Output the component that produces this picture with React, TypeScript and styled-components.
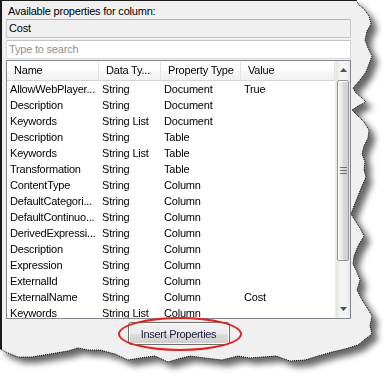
import React from 'react';
import styled, { createGlobalStyle } from 'styled-components';

const GlobalStyle = createGlobalStyle`
  html, body {
    margin: 0;
    padding: 0;
    background: #ffffff;
  }
  * {
    box-sizing: border-box;
  }
`;

// torn paper edge, right side then bottom
const EDGE: [number, number][] = [
  [356, 0], [359, 5], [364, 9], [369, 16], [371, 24], [367, 31], [365, 40], [368, 48],
  [372, 56], [369, 64], [366, 72], [360, 80], [353, 88], [356, 93], [362, 98], [366, 102],
  [358, 106], [352, 110], [358, 116], [364, 122], [369, 130], [368, 138], [364, 146],
  [362, 154], [365, 162], [364, 170], [366, 177], [362, 186], [358, 196], [354, 206],
  [351, 214], [356, 222], [360, 228], [364, 236], [358, 246], [354, 256], [353, 264],
  [357, 272], [360, 280], [357, 290], [361, 298], [366, 306], [372, 316], [370, 326],
  [372, 334], [364, 340], [358, 345],
  [345, 349], [332, 352], [318, 356], [305, 360], [290, 361], [276, 356], [262, 357],
  [250, 358], [238, 356], [222, 360], [205, 358], [190, 356], [178, 359], [168, 362],
  [155, 356], [140, 358], [128, 360], [115, 354], [100, 350], [88, 350], [78, 348],
  [68, 351], [56, 353], [44, 355], [32, 357], [18, 357], [8, 353], [0, 349],
];

const clipShape = `polygon(0px 0px, ${EDGE.map(([x, y]) => `${x}px ${y}px`).join(', ')})`;
const edgeLine = EDGE.map(([x, y]) => `${x},${y}`).join(' ');

const ROWS = [
  { name: 'AllowWebPlayer...', type: 'String', prop: 'Document', value: 'True' },
  { name: 'Description', type: 'String', prop: 'Document', value: '' },
  { name: 'Keywords', type: 'String List', prop: 'Document', value: '' },
  { name: 'Description', type: 'String', prop: 'Table', value: '' },
  { name: 'Keywords', type: 'String List', prop: 'Table', value: '' },
  { name: 'Transformation', type: 'String', prop: 'Table', value: '' },
  { name: 'ContentType', type: 'String', prop: 'Column', value: '' },
  { name: 'DefaultCategori...', type: 'String', prop: 'Column', value: '' },
  { name: 'DefaultContinuo...', type: 'String', prop: 'Column', value: '' },
  { name: 'DerivedExpressi...', type: 'String', prop: 'Column', value: '' },
  { name: 'Description', type: 'String', prop: 'Column', value: '' },
  { name: 'Expression', type: 'String', prop: 'Column', value: '' },
  { name: 'ExternalId', type: 'String', prop: 'Column', value: '' },
  { name: 'ExternalName', type: 'String', prop: 'Column', value: 'Cost' },
  { name: 'Keywords', type: 'String List', prop: 'Column', value: '' },
];

const COLS = [92, 62, 80, 94];

// Styles
const Page = styled.div`
  position: relative;
  width: 384px;
  height: 377px;
  overflow: hidden;
  font-family: 'Liberation Sans', Arial, sans-serif;
  font-size: 11px;
  letter-spacing: -0.2px;
  color: #000;
`;

const Sheet = styled.div`
  filter: drop-shadow(6px 6px 3px rgba(0, 0, 0, 0.6));
`;

const Panel = styled.div`
  width: 384px;
  height: 377px;
  background: #f0f0f0;
  border-left: 2px solid #1a1a1a;
  border-top: 1px solid #1a1a1a;
  clip-path: ${clipShape};
  padding: 2px 0 0 4px;
`;

const Body = styled.div`
  width: 345px;
  display: flex;
  flex-direction: column;
`;

const Label = styled.div`
  height: 16px;
  line-height: 16px;
  padding-left: 2px;
`;

const Field = styled.div<{ $readonly?: boolean }>`
  height: 19px;
  line-height: 17px;
  padding-left: 2px;
  border: 1px solid ${(p) => (p.$readonly ? '#c9c9c9' : '#d6d6d6')};
  border-top-color: ${(p) => (p.$readonly ? '#b5b5b5' : '#c4c4c4')};
  background: ${(p) => (p.$readonly ? '#f0f0f0' : '#ffffff')};
  color: ${(p) => (p.$readonly ? '#000' : '#8f8f8f')};
  margin-bottom: 2px;
`;

const ListView = styled.div`
  height: 259px;
  margin-top: -1px;
  border: 1px solid #828790;
  background: #fff;
  display: flex;
  overflow: hidden;
`;

const Grid = styled.div`
  flex: 1;
  display: flex;
  flex-direction: column;
`;

const HeaderRow = styled.div`
  display: flex;
  height: 20px;
  background: linear-gradient(#ffffff, #ffffff 50%, #f7f8fa 51%, #f1f2f4);
  border-bottom: 1px solid #d5d5d5;
`;

const HeaderCell = styled.div<{ $w: number }>`
  width: ${(p) => p.$w}px;
  line-height: 19px;
  padding-left: 7px;
  border-right: 1px solid #e3e4e6;
  white-space: nowrap;
  overflow: hidden;
`;

const Row = styled.div`
  display: flex;
  height: 16px;
  line-height: 16px;
`;

const Cell = styled.div<{ $w: number }>`
  width: ${(p) => p.$w}px;
  padding-left: 3px;
  white-space: nowrap;
  overflow: hidden;
`;

const ScrollBar = styled.div`
  width: 16px;
  display: flex;
  flex-direction: column;
  background: linear-gradient(90deg, #e3e3e3, #f3f3f3 30%, #f3f3f3 70%, #e8e8e8);
  border-left: 1px solid #ececec;
`;

const Arrow = styled.div`
  height: 18px;
  display: flex;
  align-items: center;
  justify-content: center;
`;

const Thumb = styled.div`
  height: 181px;
  margin: 1px 1px 0;
  border: 1px solid #979797;
  border-radius: 2px;
  background: linear-gradient(90deg, #f2f2f2, #e8e8e8 45%, #d6d6d6 55%, #d0d0d0);
  box-shadow: inset 1px 1px 0 #fff;
  display: flex;
  align-items: center;
  justify-content: center;
`;

const Grip = styled.div`
  width: 7px;
  height: 7px;
  background: repeating-linear-gradient(#6f6f6f 0 1px, transparent 1px 3px);
`;

const Track = styled.div`
  flex: 1;
`;

const ButtonRow = styled.div`
  display: flex;
  justify-content: center;
  padding-top: 3px;
`;

const Highlight = styled.div`
  position: relative;

  &::after {
    content: '';
    position: absolute;
    inset: -5px -12px -6px -10px;
    border: 2px solid #e3211f;
    border-radius: 50%;
    pointer-events: none;
  }
`;

const Button = styled.button`
  width: 102px;
  height: 23px;
  font-family: inherit;
  font-size: 11px;
  letter-spacing: -0.3px;
  color: #1c1c3a;
  border: 1px solid #707070;
  border-radius: 3px;
  background: linear-gradient(#f2f2f2, #ebebeb 50%, #dddddd 51%, #cfcfcf);
  box-shadow: inset 0 0 0 1px #fcfcfc;
  padding: 0;
`;

const Outline = styled.svg`
  position: absolute;
  left: 0;
  top: 0;
  pointer-events: none;
`;

const UpArrow = () => (
  <svg width="7" height="4" viewBox="0 0 7 4">
    <path d="M0 4 L3.5 0 L7 4 Z" fill="#4d4d4d" />
  </svg>
);

const DownArrow = () => (
  <svg width="7" height="4" viewBox="0 0 7 4">
    <path d="M0 0 L3.5 4 L7 0 Z" fill="#4d4d4d" />
  </svg>
);

const App: React.FC = () => {
  return (
    <Page>
      <GlobalStyle />
      <Sheet>
        <Panel>
          <Body>
            <Label>Available properties for column:</Label>
            <Field $readonly>Cost</Field>
            <Field>Type to search</Field>
            <ListView>
              <Grid>
                <HeaderRow>
                  <HeaderCell $w={COLS[0]}>Name</HeaderCell>
                  <HeaderCell $w={COLS[1]}>Data Ty...</HeaderCell>
                  <HeaderCell $w={COLS[2]}>Property Type</HeaderCell>
                  <HeaderCell $w={COLS[3]}>Value</HeaderCell>
                </HeaderRow>
                {ROWS.map((r, i) => (
                  <Row key={i}>
                    <Cell $w={COLS[0]}>{r.name}</Cell>
                    <Cell $w={COLS[1]}>{r.type}</Cell>
                    <Cell $w={COLS[2]}>{r.prop}</Cell>
                    <Cell $w={COLS[3]}>{r.value}</Cell>
                  </Row>
                ))}
              </Grid>
              <ScrollBar>
                <Arrow>
                  <UpArrow />
                </Arrow>
                <Thumb>
                  <Grip />
                </Thumb>
                <Track />
                <Arrow>
                  <DownArrow />
                </Arrow>
              </ScrollBar>
            </ListView>
            <ButtonRow>
              <Highlight>
                <Button>Insert Properties</Button>
              </Highlight>
            </ButtonRow>
          </Body>
        </Panel>
      </Sheet>
      <Outline width="384" height="377" viewBox="0 0 384 377">
        <polyline points={edgeLine} fill="none" stroke="#000" strokeWidth="1" strokeDasharray="1 1" />
      </Outline>
    </Page>
  );
};

export default App;
